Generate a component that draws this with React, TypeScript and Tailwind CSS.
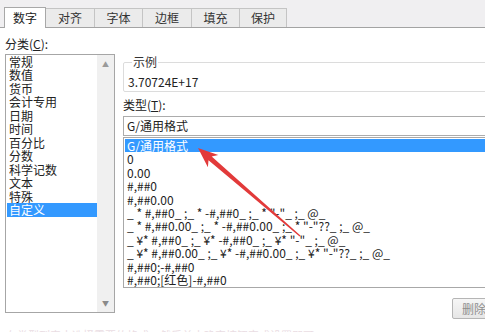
import React from "react";

const font = { fontFamily: '"Noto Sans CJK SC", "Noto Sans", sans-serif' };

const tabs = ["数字", "对齐", "字体", "边框", "填充", "保护"];
const tabW = [42, 49, 48, 49, 48, 47];

const cats = ["常规", "数值", "货币", "会计专用", "日期", "时间", "百分比", "分数", "科学记数", "文本", "特殊", "自定义"];

const types = [
  "G/通用格式",
  "0",
  "0.00",
  "#,##0",
  "#,##0.00",
  '_ * #,##0_ ;_ * -#,##0_ ;_ * "-"_ ;_ @_',
  '_ * #,##0.00_ ;_ * -#,##0.00_ ;_ * "-"??_ ;_ @_',
  '_ ¥* #,##0_ ;_ ¥* -#,##0_ ;_ ¥* "-"_ ;_ @_',
  '_ ¥* #,##0.00_ ;_ ¥* -#,##0.00_ ;_ ¥* "-"??_ ;_ @_',
  "#,##0;-#,##0",
  "#,##0;[红色]-#,##0",
];

export default function App() {
  return (
    <div
      className="relative w-[485px] h-[334px] overflow-hidden bg-white text-[12px] text-[#222]"
      style={font}
    >
      {/* Tab strip */}
      <div className="h-[28px] bg-[#f0eff1] border-b border-[#a3a3a3] flex items-end pl-[4px]">
        {tabs.map((t, i) => {
          const active = i === 0;
          return (
            <div
              key={t}
              style={{ width: tabW[i] }}
              className={
                active
                  ? "relative z-10 -mb-px h-[21px] bg-white border border-b-0 border-[#a8a8a8] flex items-center justify-center leading-[14px]"
                  : "h-[19px] bg-[#ebebeb] border border-b-0 border-l-0 border-[#c4c4c4] flex items-center justify-center leading-[14px] text-[#333]"
              }
            >
              {t}
            </div>
          );
        })}
      </div>

      {/* Content */}
      <div className="flex">
        {/* Left column */}
        <div className="ml-[5px] w-[110px] pt-[9px] shrink-0">
          <div className="leading-[14px]">
            分类(<span className="underline">C</span>):
          </div>
          <div className="mt-[3px] h-[259px] border border-[#a6a6a6] flex">
            <div className="flex-1 pl-[1px] pt-0">
              {cats.map((c, i) => (
                <div
                  key={c}
                  className={
                    i === 11
                      ? "h-[13.48px] leading-[13.48px] pl-[2px] bg-[#3399ff] text-white"
                      : "h-[13.48px] leading-[13.48px] pl-[2px]"
                  }
                >
                  {c}
                </div>
              ))}
            </div>
            <div className="w-[17px] bg-[#f0f0f0] flex flex-col justify-between items-center py-[4px]">
              <span className="text-[7px] leading-[10px] text-[#9a9a9a]">▲</span>
              <span className="text-[7px] leading-[10px] text-[#8a8a8a]">▼</span>
            </div>
          </div>
        </div>

        {/* Right column */}
        <div className="ml-[8px] w-[420px] shrink-0">
          <fieldset className="mt-[27px] border border-[#dcdcdc] rounded-[2px] pl-[4px] pb-[2px]">
            <legend className="ml-[4px] px-[1px] leading-[14px] text-[#333]">示例</legend>
            <div className="pt-[6px] leading-[14px]">3.70724E+17</div>
          </fieldset>
          <div className="mt-[6px] leading-[14px] pl-[-1px]">
            类型(<span className="underline">T</span>):
          </div>
          <div className="mt-[4px] h-[20px] border border-[#acacac] pl-[3px] flex items-center leading-[14px]">
            G/通用格式
          </div>
          <div className="mt-[1px] h-[151px] border border-[#a8a8a8] p-[1px]">
            {types.map((t, i) => (
              <div
                key={i}
                className={
                  i === 0
                    ? "h-[13.4px] leading-[13.4px] pl-[2px] bg-[#3399ff] text-white whitespace-pre"
                    : "h-[13.4px] leading-[13.4px] pl-[2px] whitespace-pre"
                }
              >
                {t}
              </div>
            ))}
          </div>
          <div className="mt-[10px] ml-[329px] w-[72px] h-[21px] border border-[#b5b5b5] rounded-[2px] bg-gradient-to-b from-[#f6f6f6] to-[#e6e6e6] flex items-center pl-[9px] text-[#8e8e8e] leading-[14px]">
            删除
          </div>
        </div>
      </div>

      {/* faint cut-off text at bottom */}
      <div className="mt-[9px] ml-[6px] h-[4px] overflow-hidden leading-[14px] text-[11px] text-[#eadde3] whitespace-nowrap">
        在类型列表中选择需要的格式，然后单击确定按钮完成设置即可
      </div>

      {/* Red arrow annotation */}
      <svg className="absolute left-0 top-0 pointer-events-none" width="485" height="334">
        <polygon
          points="198,148 218.3,155 211.7,156.5 300.4,235.5 299.6,236.5 208.5,160.3 207.9,167.2"
          fill="#e23a3a"
        />
      </svg>
    </div>
  );
}
